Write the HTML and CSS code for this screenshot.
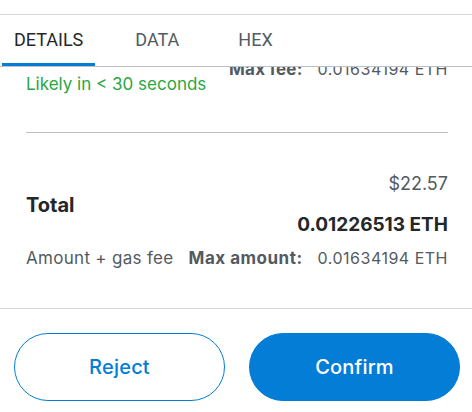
FILE: index.html
```html
<!DOCTYPE html>
<html lang="en">
<head>
<meta charset="utf-8">
<title>Confirm transaction</title>
<link rel="stylesheet" href="styles.css">
</head>
<body>
<div class="page">
  <nav class="tabs">
    <div class="tab tab--active">DETAILS</div>
    <div class="tab">DATA</div>
    <div class="tab tab--hex">HEX</div>
  </nav>
  <div class="content">
    <div class="scroll">
      <div class="maxfee-row">
        <span class="label-bold">Max fee:</span>
        <span class="value-gray">0.01634194 ETH</span>
      </div>
      <div class="likely">Likely in &lt; 30 seconds</div>
      <hr class="divider">
      <div class="total-row">
        <div class="total-label">Total</div>
        <div class="total-values">
          <div class="fiat">$22.57</div>
          <div class="eth">0.01226513 ETH</div>
        </div>
      </div>
      <div class="sub-row">
        <span class="sub-label">Amount + gas fee</span>
        <span class="sub-right">
          <span class="label-bold">Max amount:</span>
          <span class="value-gray">0.01634194 ETH</span>
        </span>
      </div>
    </div>
  </div>
  <footer class="footer">
    <button class="btn btn--secondary">Reject</button>
    <button class="btn btn--primary">Confirm</button>
  </footer>
</div>
</body>
</html>
```
FILE: styles.css
```css
* { box-sizing: border-box; }
html, body { margin: 0; padding: 0; background: #fff; }
body {
  font-family: Inter, "Noto Sans", sans-serif;
  color: #24272a;
  width: 472px;
  height: 412px;
  overflow: hidden;
}
.page {
  padding-top: 14px;
  display: flex;
  flex-direction: column;
  height: 412px;
}
.tabs {
  display: flex;
  border-top: 1px solid #d6d9dc;
  border-bottom: 1px solid #bbc0c5;
  padding-left: 2px;
}
.tab {
  font-family: Roboto, "Liberation Sans", sans-serif;
  font-size: 18px;
  line-height: 20px;
  padding: 15px 13px 13px;
  border-bottom: 3px solid transparent;
  color: #535a61;
}
.tab--active {
  padding: 15px 12px 13px;
  color: #24272a;
  border-bottom-color: #037dd6;
}
.tab + .tab { margin-left: 27px; }
.tab + .tab--hex { margin-left: 33px; }
.content {
  height: 241px;
  overflow: hidden;
}
.scroll {
  padding: 0 24px 0 26px;
  margin-top: -6px;
}
.maxfee-row {
  display: flex;
  justify-content: flex-end;
  gap: 15px;
  font-size: 16px;
  line-height: 16px;
}
.maxfee-row .label-bold { letter-spacing: 0.2px; }
.label-bold {
  font-weight: 700;
  color: #535a61;
  font-size: 17px;
  letter-spacing: 0.5px;
}
.value-gray { color: #535a61; font-size: 16px; letter-spacing: 0.5px; }
.likely {
  color: #28a745;
  font-size: 17px;
  line-height: 20px;
  margin-top: -3px;
}
.divider {
  border: 0;
  border-top: 1px solid #bbc0c5;
  margin: 38px 0 0;
}
.total-row {
  display: flex;
  justify-content: space-between;
  align-items: center;
  margin-top: 39px;
}
.total-label {
  font-size: 20px;
  font-weight: 700;
  line-height: 24px;
}
.total-values {
  display: flex;
  flex-direction: column;
  align-items: flex-end;
  gap: 17px;
}
.fiat {
  font-size: 18px;
  line-height: 24px;
  color: #535a61;
}
.eth {
  font-size: 19px;
  font-weight: 700;
  line-height: 24px;
}
.sub-row {
  display: flex;
  justify-content: space-between;
  align-items: baseline;
  line-height: 20px;
  margin-top: 11px;
  color: #535a61;
}
.sub-label { font-size: 17px; letter-spacing: 0.3px; }
.sub-right { display: flex; gap: 15px; align-items: baseline; }
.footer {
  border-top: 1px solid #d6d9dc;
  display: flex;
  gap: 24px;
  padding: 24px 12px 0 14px;
}
.btn {
  flex: 1;
  height: 68px;
  border-radius: 34px;
  font-family: Inter, "Noto Sans", sans-serif;
  font-size: 20px;
  font-weight: 500;
  letter-spacing: 0.2px;
  cursor: pointer;
}
.btn--secondary {
  background: #fff;
  border: 1px solid #037dd6;
  color: #037dd6;
}
.btn--primary {
  background: #037dd6;
  border: 1px solid #037dd6;
  color: #fff;
}
```
